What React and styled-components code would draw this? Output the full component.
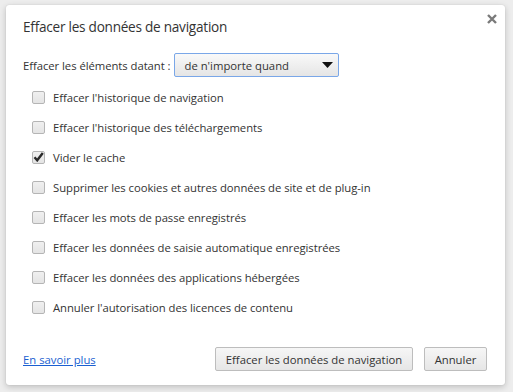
import React from 'react';
import styled, { createGlobalStyle } from 'styled-components';

const GlobalStyle = createGlobalStyle`
  html, body {
    margin: 0;
    padding: 0;
    background: #ededed;
  }
  body {
    font-family: "Open Sans", "Noto Sans", sans-serif;
  }
`;

const items = [
  { label: "Effacer l'historique de navigation", checked: false },
  { label: "Effacer l'historique des téléchargements", checked: false },
  { label: 'Vider le cache', checked: true },
  { label: 'Supprimer les cookies et autres données de site et de plug-in', checked: false },
  { label: 'Effacer les mots de passe enregistrés', checked: false },
  { label: 'Effacer les données de saisie automatique enregistrées', checked: false },
  { label: 'Effacer les données des applications hébergées', checked: false },
  { label: "Annuler l'autorisation des licences de contenu", checked: false },
];

function App() {
  return (
    <Page>
      <GlobalStyle />
      <Dialog>
        <Header>
          <Title>Effacer les données de navigation</Title>
          <Close aria-label="Fermer">
            <svg width="10" height="10" viewBox="0 0 10 10">
              <path d="M1 1 L9 9 M9 1 L1 9" stroke="#7a7a7a" strokeWidth="2.4" />
            </svg>
          </Close>
        </Header>
        <PeriodRow>
          <Label>Effacer les éléments datant :</Label>
          <Select>
            <span>de n'importe quand</span>
            <svg width="11" height="6" viewBox="0 0 11 6">
              <path d="M0 0 L11 0 L5.5 6 Z" fill="#111" />
            </svg>
          </Select>
        </PeriodRow>
        <List>
          {items.map((it) => (
            <Row key={it.label}>
              <Box>
                {it.checked && (
                  <svg width="11" height="10" viewBox="0 0 11 10">
                    <path d="M1.5 5.3 L4.2 8.3 L9.8 1" stroke="#2a2a2a" strokeWidth="2.4" fill="none" />
                  </svg>
                )}
              </Box>
              <RowText>{it.label}</RowText>
            </Row>
          ))}
        </List>
        <Footer>
          <Link href="#">En savoir plus</Link>
          <Buttons>
            <Button $w={198}>Effacer les données de navigation</Button>
            <Button $w={63}>Annuler</Button>
          </Buttons>
        </Footer>
      </Dialog>
    </Page>
  );
}

export default App;

const Page = styled.div`
  width: 513px;
  height: 392px;
  padding: 5px 0 0 6px;
  box-sizing: border-box;
`;

const Dialog = styled.div`
  width: 499px;
  height: 380px;
  box-sizing: border-box;
  background: #fff;
  border-radius: 3px;
  box-shadow: 0 2px 6px rgba(0, 0, 0, 0.2), 0 0 1px rgba(0, 0, 0, 0.18);
  padding: 9px 18px 0 17px;
  display: flex;
  flex-direction: column;
  color: #333;
`;

const Header = styled.div`
  display: flex;
  align-items: center;
  justify-content: space-between;
  height: 24px;
`;

const Title = styled.div`
  font-size: 13.6px;
  color: #333;
  letter-spacing: -0.25px;
`;

const Close = styled.div`
  display: flex;
  margin-top: -14px;
  margin-right: -10px;
`;

const PeriodRow = styled.div`
  display: flex;
  align-items: center;
  margin-top: 15px;
  height: 24px;
  gap: 3px;
`;

const Label = styled.span`
  font-size: 11.3px;
  letter-spacing: -0.05px;
  color: #333;
`;

const Select = styled.div`
  width: 165px;
  height: 24px;
  box-sizing: border-box;
  border: 1px solid #7aa7e8;
  border-radius: 2px;
  background: linear-gradient(#f9f9f9, #e5e5e5);
  display: flex;
  align-items: center;
  justify-content: space-between;
  padding: 0 5px 0 10px;
  font-size: 11.3px;
  color: #333;
`;

const List = styled.div`
  display: flex;
  flex-direction: column;
  margin-top: 5px;
  padding-left: 9px;
`;

const Row = styled.div`
  display: flex;
  align-items: center;
  height: 30px;
  gap: 8px;
`;

const Box = styled.div`
  width: 13px;
  height: 13px;
  box-sizing: border-box;
  border: 1px solid #b5b5b5;
  border-radius: 2px;
  background: linear-gradient(#f0f0f0, #e4e4e4);
  display: flex;
  align-items: center;
  justify-content: center;
`;

const RowText = styled.span`
  font-size: 11.3px;
  letter-spacing: -0.05px;
  color: #333;
`;

const Footer = styled.div`
  display: flex;
  align-items: center;
  justify-content: space-between;
  margin-top: 25px;
  height: 24px;
`;

const Link = styled.a`
  font-size: 11.3px;
  color: #1a5fd1;
  text-decoration: underline;
`;

const Buttons = styled.div`
  display: flex;
  gap: 11px;
`;

const Button = styled.button`
  width: ${(p) => p.$w}px;
  height: 24px;
  box-sizing: border-box;
  border: 1px solid #bdbdbd;
  border-radius: 2px;
  background: linear-gradient(#f6f6f6, #e6e6e6);
  font-family: "Open Sans", "Noto Sans", sans-serif;
  font-size: 11.3px;
  color: #333;
  padding: 0;
  text-align: center;
`;
